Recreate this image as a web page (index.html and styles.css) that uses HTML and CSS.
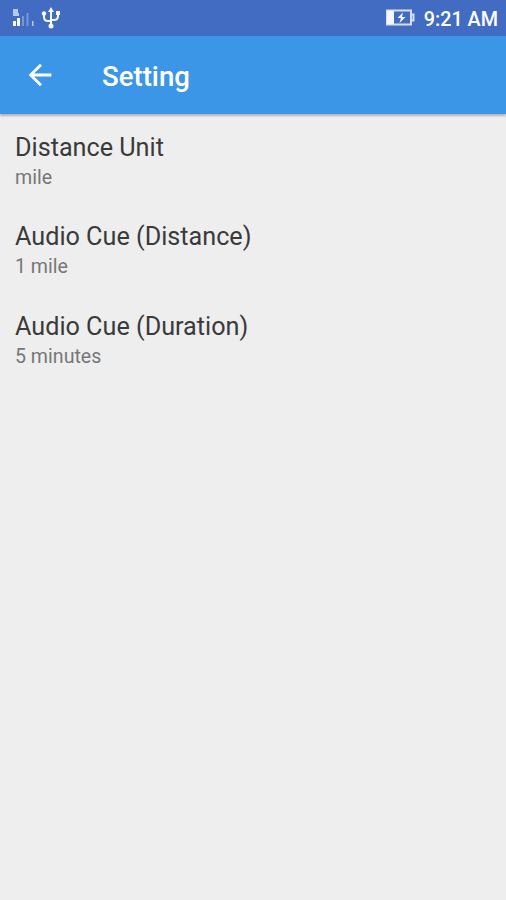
FILE: index.html
```html
<!DOCTYPE html>
<html lang="en">
<head>
<meta charset="utf-8">
<title>Setting</title>
<link rel="stylesheet" href="styles.css">
</head>
<body>
<div class="status">
  <svg class="signal" width="24" height="20" viewBox="0 0 24 20"><path class="soft" d="M2 1h5v4h1v3H2z"/><path class="bright" d="M2 13h3v5H2zM6 10h3v8H6z"/><path class="dim" d="M11 8h2v10h-2zM15.500 5h2v13h-2z"/><path class="soft" d="M21 13h1.500v5H21z"/></svg>
  <svg class="usb" width="20" height="22" viewBox="0 0 20 22"><path class="line" d="M10 4v14M3 8v2q0 4 4 4h3M17 7v2q0 4-4 4h-3"/><path class="fill" d="M10 0l3 5H7zM15 4h4v4h-4z"/><circle class="fill" cx="3" cy="6.500" r="2.200"/><circle class="fill" cx="10" cy="19" r="2.500"/></svg>
  <svg class="battery" width="30" height="18" viewBox="0 0 30 18"><path class="edge" d="M2 1.500h24v14H2zM26 5.500h2.500v6H26"/><path class="fill" d="M2 2h7v13H2zM18 3.500l-5.500 5.500h3.500l-1.500 5L20.500 8h-3.500z"/></svg>
  <span class="time">9:21 AM</span>
</div>
<header class="toolbar">
  <svg class="back" width="34" height="34" viewBox="0 0 24 24"><path d="M20 11H7.83l5.59-5.59L12 4l-8 8 8 8 1.41-1.41L7.83 13H20z"/></svg>
  <h1 class="title">Setting</h1>
</header>
<main class="list">
  <div class="item"><div class="name">Distance Unit</div><div class="value">mile</div></div>
  <div class="item"><div class="name">Audio Cue (Distance)</div><div class="value">1 mile</div></div>
  <div class="item"><div class="name">Audio Cue (Duration)</div><div class="value">5 minutes</div></div>
</main>
</body>
</html>
```
FILE: styles.css
```css
* { box-sizing: border-box; }
body { margin: 0; height: 900px; background: #eee; font-family: Roboto, sans-serif; overflow: hidden; }
.status { display: flex; align-items: center; height: 36px; padding: 0 8px 0 11px; background: #426cc2; color: #fff; }
.usb { margin-left: 6px; }
.battery { margin-left: auto; }
.time { margin-left: 9px; font-size: 19.8px; font-weight: 500; line-height: 34px; padding-top: 4px; }
.fill, .bright { fill: #f4f8ff; }
.soft { fill: #b5c8ed; }
.line { fill: none; stroke: #f4f8ff; stroke-width: 2; }
.edge { fill: none; stroke: #d5e0f6; stroke-width: 2; }
.dim { fill: #7896d6; }
.toolbar { display: flex; align-items: center; height: 78px; padding-left: 23px; background: #3c96e8; color: #fff; box-shadow: 0 2px 2px rgba(0,0,0,.25); }
.back { fill: #fff; }
.title { margin: 3px 0 0 45px; font-size: 27.6px; font-weight: 500; line-height: 34px; }
.list { padding: 17.7px 15px; }
.item { height: 89.5px; }
.name { font-size: 25.2px; line-height: 32px; color: #3a3a3a; }
.value { font-size: 19.6px; line-height: 27px; color: #777; }
```
